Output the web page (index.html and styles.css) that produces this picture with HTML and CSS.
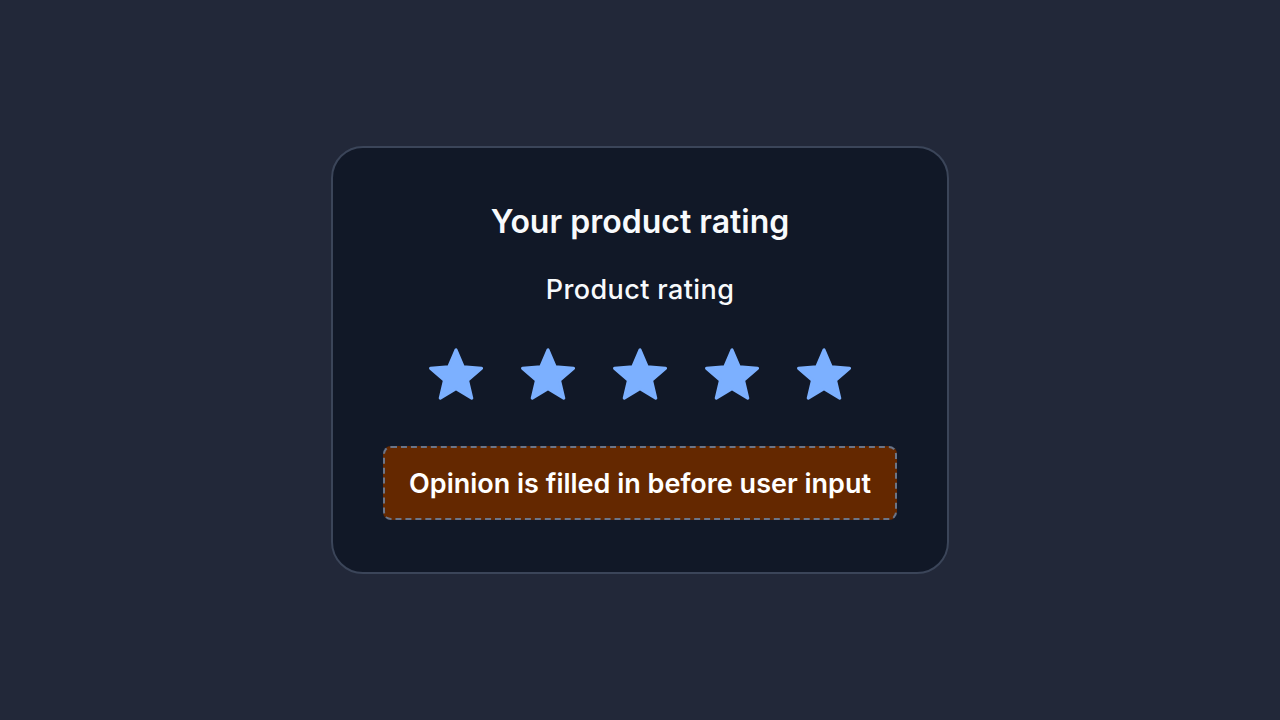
FILE: index.html
```
<!DOCTYPE html>
<html lang="en">
<head>
    <meta charset="UTF-8">
    <meta name="viewport" content="width=device-width, initial-scale=1.0">
    <title>Product Rating</title>
    <link rel="stylesheet" href="styles.css">
</head>
<body>
    <div class="card">
        <h1 class="title">Your product rating</h1>
        <h2 class="subtitle">Product rating</h2>

        <!--Stars-->
        <div class="stars">
            <svg class="star" viewBox="1.4 1.4 21.2 20.2"><path d="M12 17.27L18.18 21l-1.64-7.03L22 9.24l-7.19-.61L12 2 9.19 8.63 2 9.24l5.46 4.73L5.82 21z"/></svg>
            <svg class="star" viewBox="1.4 1.4 21.2 20.2"><path d="M12 17.27L18.18 21l-1.64-7.03L22 9.24l-7.19-.61L12 2 9.19 8.63 2 9.24l5.46 4.73L5.82 21z"/></svg>
            <svg class="star" viewBox="1.4 1.4 21.2 20.2"><path d="M12 17.27L18.18 21l-1.64-7.03L22 9.24l-7.19-.61L12 2 9.19 8.63 2 9.24l5.46 4.73L5.82 21z"/></svg>
            <svg class="star" viewBox="1.4 1.4 21.2 20.2"><path d="M12 17.27L18.18 21l-1.64-7.03L22 9.24l-7.19-.61L12 2 9.19 8.63 2 9.24l5.46 4.73L5.82 21z"/></svg>
            <svg class="star" viewBox="1.4 1.4 21.2 20.2"><path d="M12 17.27L18.18 21l-1.64-7.03L22 9.24l-7.19-.61L12 2 9.19 8.63 2 9.24l5.46 4.73L5.82 21z"/></svg>
        </div>

        <div class="opinion">Opinion is filled in before user input</div>
    </div>
</body>
</html>
```

FILE: styles.css
```
body {
    margin: 0;
    height: 100vh;
    font-family: Inter, "Open Sans", sans-serif;
    background-color: #222839;
    display: flex;
    justify-content: center;
    align-items: center;
}

.card {
    width: 514px;
    padding: 55px 50px 52px;
    background-color: #111827;
    border: 2px solid #3b4559;
    border-radius: 32px;
    display: flex;
    flex-direction: column;
    align-items: center;
    color: #f8fafc;
}

.title {
    margin: 0;
    font-size: 32px;
    line-height: 38px;
    font-weight: 600;
}

.subtitle {
    margin: 32px 0 0;
    font-size: 27px;
    line-height: 34px;
    font-weight: 500;
    letter-spacing: 0.4px;
}

.stars {
    margin-top: 41px;
    display: flex;
    gap: 38px;
}

.star {
    width: 54px;
    height: 52px;
    fill: #7cb0ff;
    stroke: #7cb0ff;
    stroke-width: 1.2;
    stroke-linejoin: round;
}

.opinion {
    margin-top: 46px;
    width: 100%;
    height: 74px;
    box-sizing: border-box;
    background-color: #642800;
    border: 2px dashed #6b7589;
    border-radius: 8px;
    display: flex;
    align-items: center;
    justify-content: center;
    font-size: 27px;
    font-weight: 600;
    color: #ffffff;
}
```
